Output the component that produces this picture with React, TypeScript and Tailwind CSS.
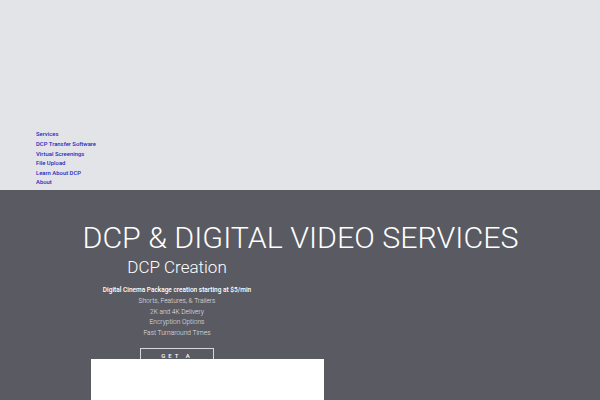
import React from "react";

const navLinks = [
  "Services",
  "DCP Transfer Software",
  "Virtual Screenings",
  "File Upload",
  "Learn About DCP",
  "About",
];

const features = [
  "Shorts, Features, & Trailers",
  "2K and 4K Delivery",
  "Encryption Options",
  "Fast Turnaround Times",
];

export default function App() {
  return (
    <div
      className="w-[600px] h-[400px] overflow-hidden flex flex-col"
      style={{ fontFamily: "Roboto, 'Liberation Sans', sans-serif" }}
    >
      <header className="h-[190px] shrink-0 bg-[#e3e4e8] flex flex-col justify-end pb-[2px]">
        <ul className="pl-[36px] flex flex-col">
          {navLinks.map((link) => (
            <li key={link} className="text-[5.9px] leading-[9.6px] font-medium text-[#2828c0]">
              <a href="#">{link}</a>
            </li>
          ))}
        </ul>
      </header>

      <main className="flex-1 bg-[#5a5a62] flex flex-col items-center text-white">
        <h1 className="mt-[28px] pl-[1px] text-[30.4px] leading-[40px] font-light">
          DCP &amp; DIGITAL VIDEO SERVICES
        </h1>
        <section className="self-start w-[354px] flex flex-col items-center">
          <h2 className="mt-[-2px] text-[17px] leading-[22px] font-light">DCP Creation</h2>
          <p className="mt-[7px] text-[6.5px] leading-[10px] font-medium">
            Digital Cinema Package creation starting at $5/min
          </p>
          <ul className="mt-[1px] flex flex-col items-center text-[#e2e2e6] font-light">
            {features.map((f) => (
              <li key={f} className="text-[6.6px] leading-[10.7px]">
                {f}
              </li>
            ))}
          </ul>
          <div className="relative mt-[9px] w-full flex justify-center">
            <button className="w-[74px] h-[24px] border border-[#d8d8dc] text-[6px] tracking-[3px] pb-[9px] font-medium">
              GET A
            </button>
            <div className="absolute left-[91px] top-[11px] w-[233px] h-[60px] bg-white" />
          </div>
        </section>
      </main>
    </div>
  );
}
